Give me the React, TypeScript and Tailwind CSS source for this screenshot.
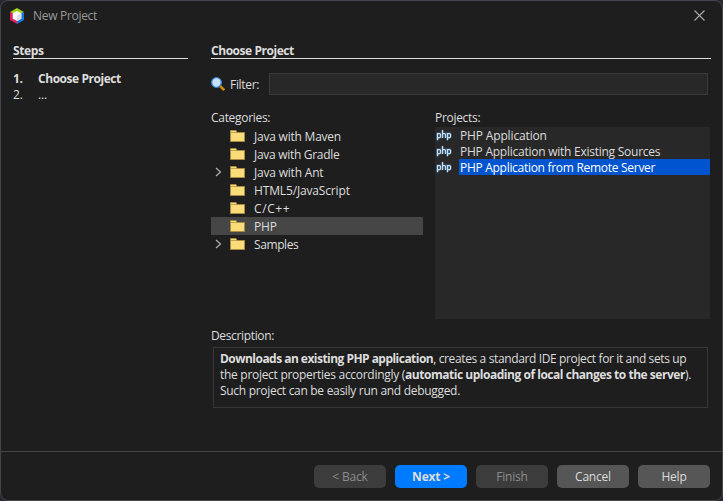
import React from 'react';

function NetBeansLogo() {
  return (
    <svg width="14" height="16" viewBox="0 0 14 16" className="shrink-0">
      <path d="M7 0L14 4L10.5 6L7 4L3.5 6L0 4Z" fill="#9fcf1b" />
      <path d="M0 4L3.5 6V10.5L7 12.5V16L0 12Z" fill="#e3175c" />
      <path d="M14 4L10.5 6V10.5L7 12.5V16L14 12Z" fill="#1478dc" />
      <path d="M7 3L11.3 5.3V10.8L7 13.1L2.7 10.8V5.3Z" fill="#f6f6f6" />
      <path d="M7 7.6L11.3 5.3V10.8L7 13.1Z" fill="#dcdfe4" />
    </svg>
  );
}

function SearchIcon() {
  return (
    <svg width="14" height="14" viewBox="0 0 14 14" className="shrink-0">
      <path d="M9.2 9.2L13.2 13" stroke="#cf8a0c" strokeWidth="2.6" />
      <circle cx="5.5" cy="5.5" r="4.8" fill="#c6e2ff" stroke="#4089d8" strokeWidth="1.3" />
    </svg>
  );
}

function FolderIcon() {
  return (
    <svg width="15" height="12" viewBox="0 0 15 12" className="shrink-0">
      <path d="M.5 11.5V.5H6L7.2 2.5H14.5V11.5Z" fill="#fbdc7b" stroke="#a58b43" />
      <path d="M1 2.5H7" stroke="#a58b43" strokeWidth=".7" />
    </svg>
  );
}

const phpStrokes =
  'M2.5 13.2V6.5H4.5Q5.5 6.5 5.5 7.5V9.5Q5.5 10.5 4.5 10.5H2.5M7.5 11V3M7.5 6.5H9.5Q10.5 6.5 10.5 7.5V11M12.5 13.2V6.5H14.5Q15.5 6.5 15.5 7.5V9.5Q15.5 10.5 14.5 10.5H12.5';

function PhpIcon() {
  return (
    <svg width="18" height="16" viewBox="0 0 18 16" className="shrink-0" fill="none">
      <path d={phpStrokes} stroke="#34495c" strokeWidth="2.8" />
      <path d={phpStrokes} stroke="#c0def5" strokeWidth="1.25" />
    </svg>
  );
}

const categories = [
  { name: 'Java with Maven', track: 'tracking-[-0.22px]' },
  { name: 'Java with Gradle', track: 'tracking-[-0.3px]' },
  { name: 'Java with Ant', track: 'tracking-[-0.2px]', expandable: true },
  { name: 'HTML5/JavaScript', track: 'tracking-[-0.15px]' },
  { name: 'C/C++', track: 'tracking-[0.6px]' },
  { name: 'PHP', track: 'tracking-[-0.2px]', selected: true },
  { name: 'Samples', track: 'tracking-[-0.4px]', expandable: true },
];

const projects = [
  { name: 'PHP Application', track: 'tracking-[-0.15px]' },
  { name: 'PHP Application with Existing Sources', track: 'tracking-[-0.25px]' },
  { name: 'PHP Application from Remote Server', track: 'tracking-[-0.29px]', selected: true },
];

const buttons = [
  { name: '< Back', style: 'bg-[#3c3c3c] text-[#8c8c8c]' },
  { name: 'Next >', style: 'bg-[#007aff] text-[#dddddd] font-bold' },
  { name: 'Finish', style: 'bg-[#3c3c3c] text-[#8c8c8c]' },
  { name: 'Cancel', style: 'bg-[#565656] text-[#dddddd]' },
  { name: 'Help', style: 'bg-[#565656] text-[#dddddd]' },
];

export default function App() {
  return (
    <div className="h-[501px] w-[723px] bg-[#252731]">
      <div className="flex h-full flex-col overflow-hidden whitespace-nowrap rounded-lg border border-[#45464d] bg-[#1e1e1e] font-['Open_Sans','Noto_Sans',sans-serif] text-[12px] leading-4 tracking-[-0.2px] text-[#dddddd]">
        <header className="flex h-[29px] shrink-0 items-center pl-[9px] pr-[17px] text-[#999999]">
          <NetBeansLogo />
          <span className="ml-[9px] tracking-[-0.3px]">New Project</span>
          <svg width="11" height="11" viewBox="0 0 11 11" className="ml-auto" stroke="#aaaaaa" strokeWidth="1.1">
            <path d="M.5 .5L10.5 10.5M10.5 .5L.5 10.5" />
          </svg>
        </header>

        <main className="flex h-[421px] shrink-0 pl-3 pr-3 pt-[13px]">
          <aside className="mr-[23px] w-[175px] shrink-0">
            <h2 className="h-4 border-b border-[#dddddd] font-bold leading-4 tracking-[-0.4px]">Steps</h2>
            <ol className="mt-3">
              <li className="flex font-bold tracking-[-0.45px]"><span className="w-[25px]">1.</span>Choose Project</li>
              <li className="flex"><span className="w-[25px]">2.</span>...</li>
            </ol>
          </aside>

          <section className="flex w-[500px] shrink-0 flex-col">
            <h2 className="h-4 shrink-0 border-b border-[#dddddd] font-bold leading-4 tracking-[-0.45px]">Choose Project</h2>
            <div className="mt-[14px] flex h-[22px] shrink-0 items-center">
              <SearchIcon />
              <label className="ml-[5px] w-[39px] pt-[2px] tracking-[-0.3px]">Filter:</label>
              <div className="h-[22px] w-[439px] border border-[#3c3c3c] bg-[#282828]" />
            </div>

            <div className="mt-[15px] flex h-[209px] shrink-0 gap-3">
              <div className="w-[212px]">
                <div className="h-[17px] tracking-[-0.3px]">Categories:</div>
                {categories.map((c) => (
                  <div key={c.name} className={`flex h-[18px] items-center pl-1 ${c.selected ? 'bg-[#464646]' : ''}`}>
                    <span className="w-[15px]">
                      {c.expandable && (
                        <svg width="7" height="10" viewBox="0 0 7 10" fill="none" stroke="#b0b0b0" strokeWidth="1.2">
                          <path d="M1 1L5.5 5L1 9" />
                        </svg>
                      )}
                    </span>
                    <FolderIcon />
                    <span className={`ml-[9px] pt-[2px] ${c.track}`}>{c.name}</span>
                  </div>
                ))}
              </div>
              <div className="flex w-[275px] flex-col">
                <div className="h-[17px] tracking-[-0.3px]">Projects:</div>
                <div className="grow bg-[#282828]">
                  {projects.map((p) => (
                    <div key={p.name} className="flex h-4">
                      <span className="w-6"><PhpIcon /></span>
                      <span className={`h-4 grow pl-px pt-px ${p.track} ${p.selected ? 'bg-[#0054cf] text-white' : ''}`}>{p.name}</span>
                    </div>
                  ))}
                </div>
              </div>
            </div>

            <div className="mt-[9px] h-[19px] tracking-[-0.35px]">Description:</div>
            <div className="ml-[2px] h-[61px] w-[495px] border border-[#373737] pl-[6px] pt-[3px]">
              <p className="tracking-[-0.37px]"><b className="tracking-[-0.53px]">Downloads an existing PHP application</b>, creates a standard IDE project for it and sets up</p>
              <p className="tracking-[-0.29px]">the project properties accordingly (<b className="tracking-[-0.47px]">automatic uploading of local changes to the server</b>).</p>
              <p className="tracking-[-0.3px]">Such project can be easily run and debugged.</p>
            </div>
          </section>
        </main>

        <footer className="flex grow justify-end gap-[9px] border-t border-[#464646] pr-3 pt-[13px]">
          {buttons.map((b) => (
            <button key={b.name} className={`h-[23px] w-[72px] rounded-[5px] ${b.style}`}>{b.name}</button>
          ))}
        </footer>
      </div>
    </div>
  );
}
